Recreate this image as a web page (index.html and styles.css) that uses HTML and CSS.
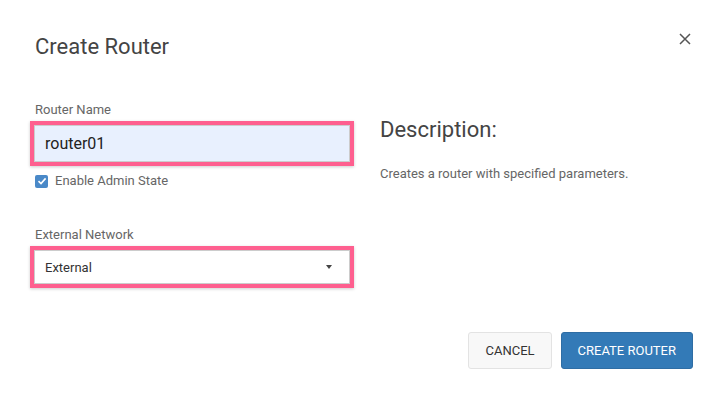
FILE: index.html
```html
<!DOCTYPE html>
<html lang="en">
<head>
    <meta charset="UTF-8">
    <title>Create Router</title>
    <link rel="stylesheet" href="styles.css">
</head>
<body>
    <div class="modal">
        <div class="modal-header">
            <h2 class="modal-title">Create Router</h2>
            <button class="close" type="button" aria-label="Close">
                <svg width="12" height="12" viewBox="0 0 12 12"><path d="M1 1L11 11M11 1L1 11" stroke="#555" stroke-width="1.5" fill="none"/></svg>
            </button>
        </div>
        <div class="modal-body">
            <div class="form-col">
                <div class="form-group">
                    <label class="control-label" for="routerName">Router Name</label>
                    <div class="highlight">
                        <input type="text" id="routerName" class="form-control filled" value="router01">
                    </div>
                    <div class="checkbox">
                        <span class="check-box">
                            <svg width="10" height="10" viewBox="0 0 10 10"><path d="M1.5 5.2L4 7.5L8.6 2.4" stroke="#fff" stroke-width="1.6" fill="none"/></svg>
                        </span>
                        <span>Enable Admin State</span>
                    </div>
                </div>
                <div class="form-group">
                    <label class="control-label" for="externalNetwork">External Network</label>
                    <div class="highlight">
                        <div class="form-control select" id="externalNetwork">
                            <span>External</span>
                            <span class="caret"></span>
                        </div>
                    </div>
                </div>
            </div>
            <div class="help-col">
                <h3>Description:</h3>
                <p>Creates a router with specified parameters.</p>
            </div>
        </div>
        <div class="modal-footer">
            <button class="btn btn-default" type="button">Cancel</button>
            <button class="btn btn-primary" type="button">Create Router</button>
        </div>
    </div>
</body>
</html>
```

FILE: styles.css
```css
body {
    margin: 0;
    background-color: #fff;
    font-family: Roboto, "Liberation Sans", sans-serif;
    color: #333;
}
.modal {
    width: 726px;
    height: 408px;
    box-sizing: border-box;
    padding: 0 33px 0 30px;
}
.modal-header {
    display: flex;
    justify-content: space-between;
    align-items: flex-start;
    padding-top: 33px;
    padding-left: 5px;
}
.modal-title {
    margin: 0;
    font-size: 22px;
    font-weight: 400;
    color: #444;
    line-height: 28px;
}
.close {
    border: none;
    background: none;
    padding: 0;
    margin-top: 0;
    margin-right: 2px;
    cursor: pointer;
}
.modal-body {
    display: flex;
    margin-top: 41px;
}
.form-col {
    width: 324px;
}
.form-group {
    margin-bottom: 38px;
}
.form-group:last-child {
    margin-bottom: 0;
}
.control-label {
    display: block;
    font-size: 13px;
    color: #666;
    margin: 0 0 3px 5px;
    line-height: 16px;
}
.highlight {
    border: 4px solid #fe5f8f;
    box-shadow: 0 1px 3px rgba(0, 0, 0, 0.2);
}
.form-control {
    display: block;
    width: 100%;
    box-sizing: border-box;
    border: 1px solid #ccc;
    font-family: inherit;
    font-size: 13px;
    color: #333;
    padding: 0 10px;
    outline: none;
}
.form-control.filled {
    height: 37px;
    font-size: 16px;
    color: #222;
    background-color: #e8f0fe;
}
.select {
    height: 34px;
    display: flex;
    align-items: center;
    justify-content: space-between;
    background-color: #fff;
}
.caret {
    width: 0;
    height: 0;
    border-left: 3.5px solid transparent;
    border-right: 3.5px solid transparent;
    border-top: 4px solid #444;
    margin-right: 7px;
}
.checkbox {
    display: flex;
    align-items: center;
    gap: 7px;
    font-size: 13px;
    line-height: 16px;
    color: #666;
    margin: 7px 0 0 5px;
}
.check-box {
    width: 13px;
    height: 13px;
    border-radius: 2px;
    background-color: #4a89c8;
    display: flex;
    align-items: center;
    justify-content: center;
}
.help-col {
    margin-left: 26px;
    padding-top: 15px;
}
.help-col h3 {
    margin: 0;
    font-size: 22px;
    font-weight: 400;
    color: #444;
    line-height: 26px;
}
.help-col p {
    margin: 23px 0 0;
    font-size: 13px;
    line-height: 15px;
    color: #666;
}
.modal-footer {
    display: flex;
    justify-content: flex-end;
    gap: 9px;
    margin-top: 44px;
}
.btn {
    height: 37px;
    padding: 0 16px;
    font-family: inherit;
    font-size: 13px;
    text-transform: uppercase;
    border-radius: 3px;
    cursor: pointer;
}
.btn-default {
    background-color: #f8f8f8;
    border: 1px solid #e3e3e3;
    color: #333;
}
.btn-primary {
    background-color: #337ab7;
    border: 1px solid #2e6da4;
    color: #fff;
}
```
